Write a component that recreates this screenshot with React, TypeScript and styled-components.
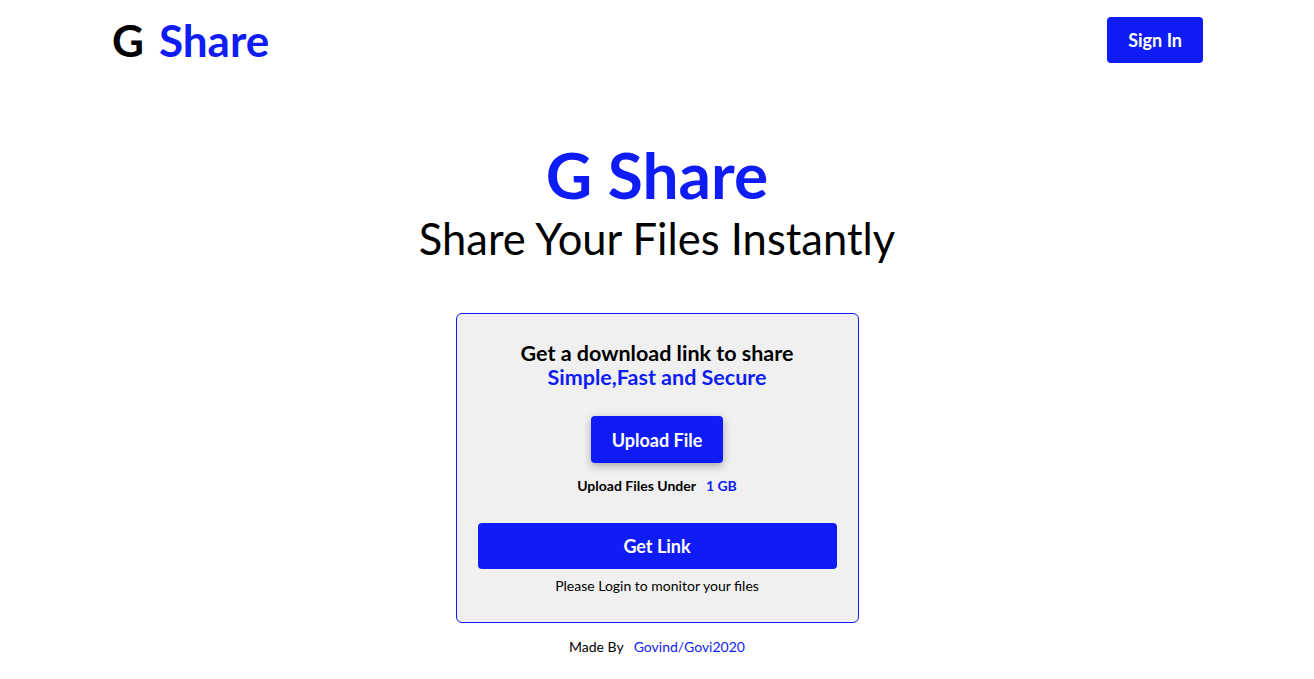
import styled, { createGlobalStyle } from 'styled-components';

const blue = '#0f1cf5';

const GlobalStyle = createGlobalStyle`
  body {
    margin: 0;
    font-family: Lato, 'Open Sans', sans-serif;
    background: #fff;
    color: #000;
  }
`;

const Nav = styled.nav`
  display: flex;
  align-items: center;
  justify-content: space-between;
  height: 80px;
  padding: 0 111px 0 112px;
`;

const Logo = styled.div`
  font-size: 44px;
  font-weight: 700;
  display: flex;
  gap: 15px;
  span:last-child {
    color: ${blue};
  }
`;

const Button = styled.button<{ $wide?: boolean; $raised?: boolean }>`
  border: none;
  border-radius: 4px;
  background: ${blue};
  color: #fff;
  font-family: Lato, sans-serif;
  font-weight: 700;
  font-size: 18px;
  height: 46px;
  width: ${(p) => (p.$wide ? '100%' : 'auto')};
  padding: 0 21px;
  box-shadow: ${(p) => (p.$raised ? '0 3px 8px rgba(0,0,0,0.3)' : 'none')};
  cursor: pointer;
`;

const Hero = styled.header`
  display: flex;
  flex-direction: column;
  align-items: center;
  margin-top: 58px;
  h1 {
    margin: 0;
    font-size: 64px;
    line-height: 74px;
    font-weight: 700;
    color: ${blue};
  }
  h2 {
    margin: 0;
    font-size: 43.5px;
    line-height: 52px;
    font-weight: 400;
  }
`;

const Card = styled.section`
  box-sizing: border-box;
  width: 403px;
  height: 310px;
  margin: 49px auto 0;
  border: 1px solid ${blue};
  border-radius: 6px;
  background: #f0f0f0;
  display: flex;
  flex-direction: column;
  align-items: center;
  padding: 27px 21px 0;
  text-align: center;
`;

const Title = styled.p<{ $blue?: boolean }>`
  margin: 0;
  font-size: 21.5px;
  line-height: 24px;
  font-weight: 700;
  color: ${(p) => (p.$blue ? blue : '#000')};
`;

const Note = styled.p<{ $bold?: boolean }>`
  margin: 0;
  font-size: 14px;
  line-height: 18px;
  font-weight: ${(p) => (p.$bold ? 700 : 400)};
  span {
    color: ${blue};
    margin-left: 10px;
  }
`;

const UploadWrap = styled.div`
  margin: 27px 0 14px;
  height: 47px;
  display: flex;
`;

const LinkWrap = styled.div`
  width: 100%;
  margin: 28px 0 8px;
`;

const Footer = styled.footer`
  text-align: center;
  margin-top: 15px;
  font-size: 14px;
  span {
    color: ${blue};
    margin-left: 10px;
  }
`;

export default function App() {
  return (
    <>
      <GlobalStyle />
      <Nav>
        <Logo>
          <span>G</span>
          <span>Share</span>
        </Logo>
        <Button>Sign In</Button>
      </Nav>
      <Hero>
        <h1>G Share</h1>
        <h2>Share Your Files Instantly</h2>
      </Hero>
      <Card>
        <Title>Get a download link to share</Title>
        <Title $blue>Simple,Fast and Secure</Title>
        <UploadWrap>
          <Button $raised style={{ height: 47 }}>Upload File</Button>
        </UploadWrap>
        <Note $bold>
          Upload Files Under<span>1 GB</span>
        </Note>
        <LinkWrap>
          <Button $wide>Get Link</Button>
        </LinkWrap>
        <Note>Please Login to monitor your files</Note>
      </Card>
      <Footer>
        Made By<span>Govind/Govi2020</span>
      </Footer>
    </>
  );
}
